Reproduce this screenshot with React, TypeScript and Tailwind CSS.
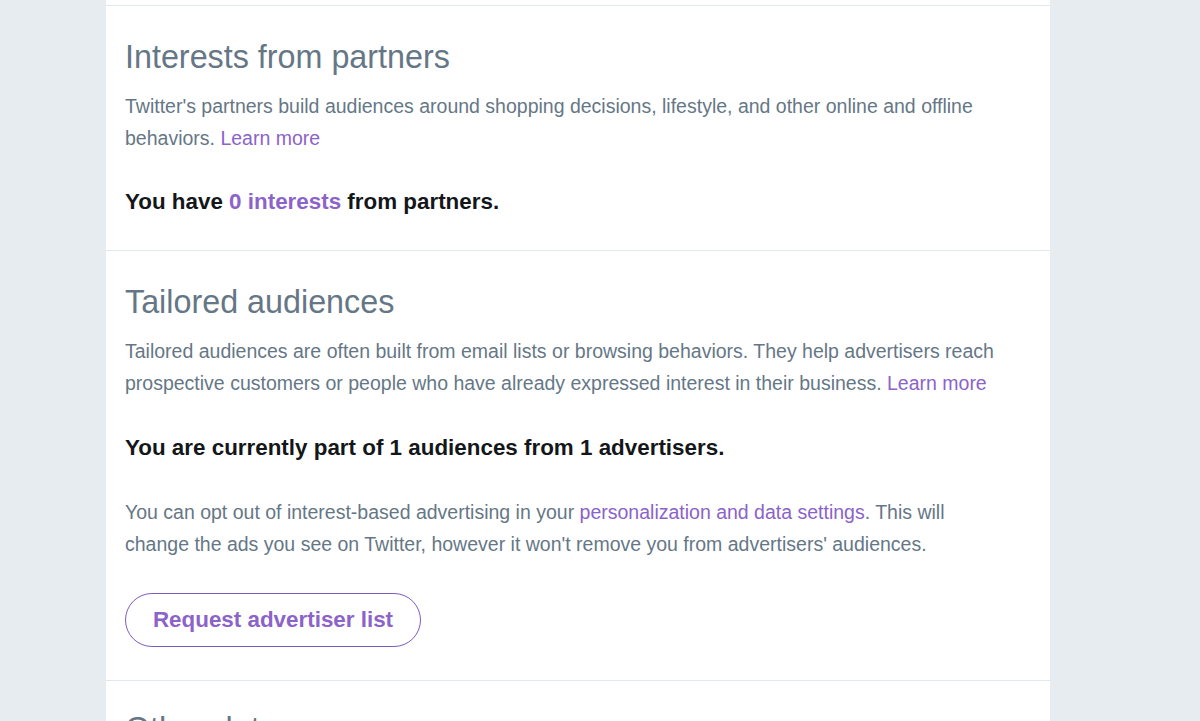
export default function App() {
  return (
    <main className="min-h-screen bg-[#e6ecf0] font-['Liberation_Sans',Arial,sans-serif] overflow-hidden h-[721px]">
      <div className="ml-[106px] w-[944px] bg-white">
        {/* tail of previous section */}
        <div className="h-[5px]" />

        {/* Interests from partners */}
        <section className="border-t border-[#e1e8ed] pt-[31px] pb-[33px] pl-[19px] pr-[50px]">
          <h2 className="text-[32.3px] leading-[40px] text-[#657786]">Interests from partners</h2>
          <p className="mt-[13px] text-[19.5px] leading-[32px] text-[#657786]">
            Twitter's partners build audiences around shopping decisions, lifestyle, and other online and offline
            behaviors. <a className="text-[#8b63c9]">Learn more</a>
          </p>
          <p className="mt-[33px] text-[22.4px] leading-[30px] font-bold text-[#14171a]">
            You have <a className="text-[#8b63c9]">0 interests</a> from partners.
          </p>
        </section>

        {/* Tailored audiences */}
        <section className="border-t border-[#e1e8ed] pt-[31px] pb-[33px] pl-[19px] pr-[50px]">
          <h2 className="text-[32.3px] leading-[40px] text-[#657786]">Tailored audiences</h2>
          <p className="mt-[13px] text-[19.5px] leading-[32px] text-[#657786]">
            Tailored audiences are often built from email lists or browsing behaviors. They help advertisers reach
            prospective customers or people who have already expressed interest in their business.{" "}
            <a className="text-[#8b63c9]">Learn more</a>
          </p>
          <p className="mt-[34px] text-[22.4px] leading-[30px] font-bold text-[#14171a]">
            You are currently part of 1 audiences from 1 advertisers.
          </p>
          <p className="mt-[33px] text-[19.5px] leading-[32px] text-[#657786]">
            You can opt out of interest-based advertising in your{" "}
            <a className="text-[#8b63c9]">personalization and data settings</a>. This will change the ads you see on
            Twitter, however it won't remove you from advertisers' audiences.
          </p>
          <button className="mt-[33px] h-[54px] w-[296px] rounded-full border-[1.5px] border-[#7f5bbd] text-[22.4px] font-bold text-[#8b63c9]">
            Request advertiser list
          </button>
        </section>

        {/* Other data */}
        <section className="border-t border-[#e1e8ed] pt-[28px] pl-[19px] pr-[50px]">
          <h2 className="text-[32.3px] leading-[40px] text-[#657786]">Other data</h2>
        </section>
      </div>
    </main>
  );
}
